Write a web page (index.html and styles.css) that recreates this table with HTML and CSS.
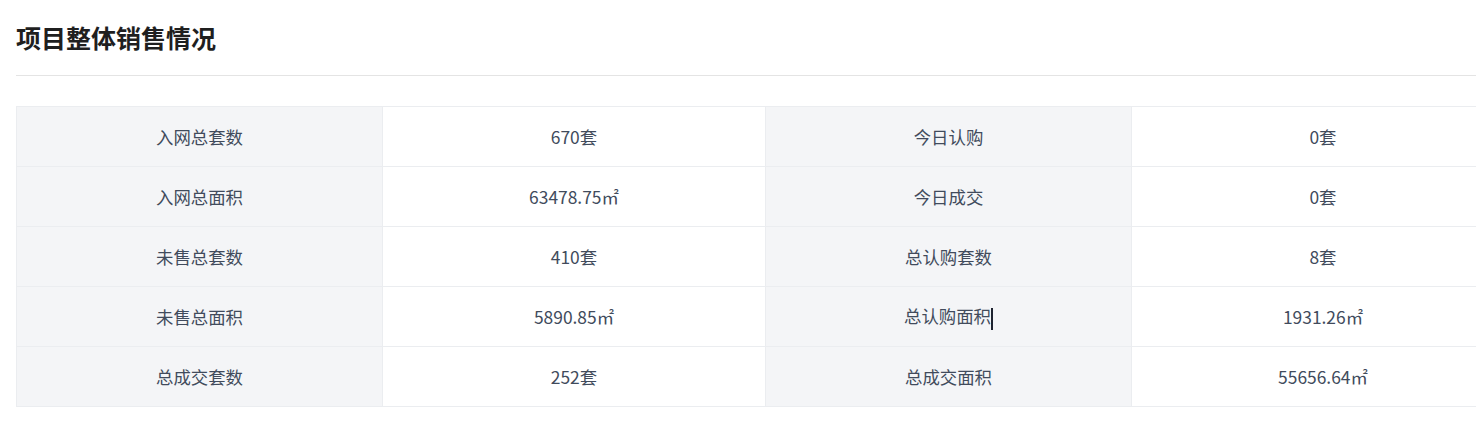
FILE: index.html
```html
<!DOCTYPE html>
<html lang="zh-CN">
<head>
<meta charset="utf-8">
<link rel="stylesheet" href="styles.css">
</head>
<body>
<div class="page">
  <h2 class="title">项目整体销售情况</h2>
  <div class="divider"></div>
  <table class="stats">
    <colgroup>
      <col class="c-label"><col class="c-value"><col class="c-label"><col class="c-value">
    </colgroup>
    <tbody>
      <tr><td class="label">入网总套数</td><td class="value">670套</td><td class="label">今日认购</td><td class="value">0套</td></tr>
      <tr><td class="label">入网总面积</td><td class="value">63478.75㎡</td><td class="label">今日成交</td><td class="value">0套</td></tr>
      <tr><td class="label">未售总套数</td><td class="value">410套</td><td class="label">总认购套数</td><td class="value">8套</td></tr>
      <tr><td class="label">未售总面积</td><td class="value">5890.85㎡</td><td class="label">总认购面积<span class="caret"></span></td><td class="value">1931.26㎡</td></tr>
      <tr><td class="label">总成交套数</td><td class="value">252套</td><td class="label">总成交面积</td><td class="value">55656.64㎡</td></tr>
    </tbody>
  </table>
</div>
</body>
</html>
```

FILE: styles.css
```css
html, body {
  margin: 0;
  padding: 0;
  background: #fff;
  overflow: hidden;
}
.page {
  padding: 0 0 0 16px;
  font-family: "Noto Sans CJK SC", "Liberation Sans", sans-serif;
  width: 1498px;
}
.title {
  margin: 0;
  height: 75px;
  line-height: 74px;
  font-size: 25px;
  font-weight: 700;
  color: #1f1f1f;
}
.divider {
  height: 1px;
  background: #e4e4e4;
  width: 1460px;
}
.stats {
  margin-top: 30px;
  border-collapse: collapse;
  table-layout: fixed;
  width: 1498px;
  font-size: 17.4px;
  color: #414b5c;
}
.c-label { width: 366px; }
.c-value { width: 383px; }
.stats td {
  height: 59px;
  padding: 0;
  text-align: center;
  vertical-align: middle;
  border: 1px solid #ebedf0;
}
.label {
  background: #f4f5f7;
}
.value {
  background: #fff;
}
.caret {
  display: inline-block;
  width: 2px;
  height: 22px;
  background: #1e2330;
  vertical-align: middle;
}
```
